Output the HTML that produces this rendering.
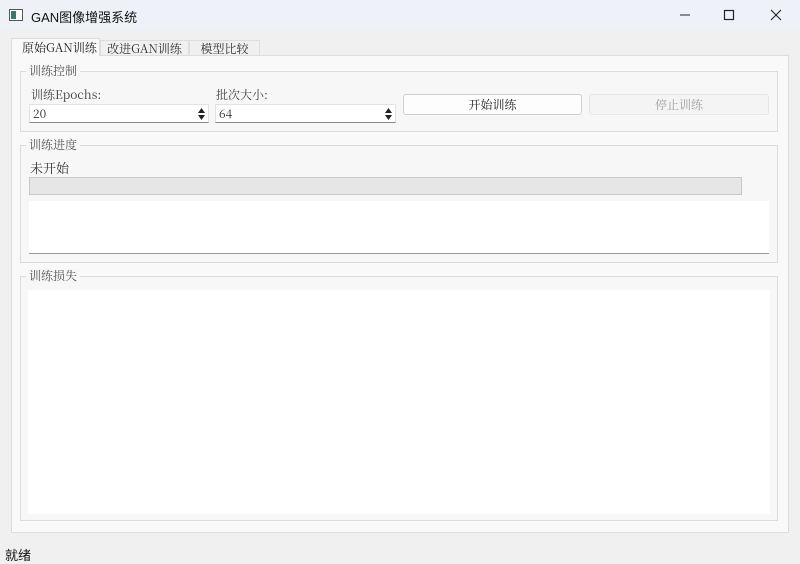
<!DOCTYPE html>
<html><head><meta charset="utf-8"><style>
*{margin:0;padding:0;box-sizing:border-box}
body{width:800px;height:563px;overflow:hidden;background:#f0f0f0;position:relative;font-family:"Noto Serif CJK SC","Liberation Serif",serif;font-size:12px;color:#333}
.a{position:absolute}
.sans{font-family:"Liberation Sans","Noto Sans CJK SC",sans-serif}
.grp{position:absolute;border:1px solid #dcdcdc;background:#f7f7f7}
.gt{position:absolute;background:#f7f7f7;padding:0 3px;color:#555;font-size:12px;line-height:14px}
.spin{position:absolute;background:#fff;border:1px solid #e2e2e2;border-bottom:1px solid #888;height:19px;line-height:17px;padding-left:3px}
.arr{position:absolute;right:2px;top:2px;width:9px;height:14px}
</style></head><body>
<div class="a" style="left:0;top:0;width:800px;height:30px;background:#eef2f8"></div>
<svg class="a" style="left:9px;top:9px" width="14" height="12"><rect x="0.5" y="0.5" width="13" height="11" fill="#fff" stroke="#555"/><rect x="2" y="2" width="5" height="8" fill="#3a7a6a"/></svg>
<div class="a sans" style="left:31px;top:7px;font-size:13px;color:#111">GAN图像增强系统</div>
<svg class="a" style="left:677px;top:8px" width="110" height="14"><line x1="3" y1="7" x2="13" y2="7" stroke="#222"/><rect x="47.5" y="2.5" width="9" height="9" fill="none" stroke="#222" stroke-width="1.2"/><path d="M94 2L104 12M104 2L94 12" stroke="#222" stroke-width="1.1"/></svg>
<div class="a" style="left:11px;top:38px;width:89px;height:18px;background:#f9f9f9;border:1px solid #ddd;border-bottom:none;z-index:2;line-height:17px;padding-left:10px;color:#222">原始GAN训练</div>
<div class="a" style="left:100px;top:40px;width:89px;height:16px;background:#f0f0f0;border:1px solid #ddd;line-height:15px;text-align:center">改进GAN训练</div>
<div class="a" style="left:189px;top:40px;width:71px;height:16px;background:#f0f0f0;border:1px solid #ddd;line-height:15px;text-align:center">模型比较</div>
<div class="a" style="left:11px;top:55px;width:778px;height:478px;background:#f9f9f9;border:1px solid #ddd"></div>
<div class="grp" style="left:20px;top:71px;width:758px;height:61px"></div>
<div class="gt" style="left:26px;top:64px">训练控制</div>
<div class="a" style="left:31px;top:86px;color:#444">训练Epochs:</div>
<div class="spin" style="left:29px;top:104px;width:180px">20<svg class="arr" viewBox="0 0 9 14"><path d="M1 6L4.5 1L8 6Z M1 8L4.5 13L8 8Z" fill="#222"/></svg></div>
<div class="a" style="left:216px;top:86px;color:#444">批次大小:</div>
<div class="spin" style="left:215px;top:104px;width:181px">64<svg class="arr" viewBox="0 0 9 14"><path d="M1 6L4.5 1L8 6Z M1 8L4.5 13L8 8Z" fill="#222"/></svg></div>
<div class="a" style="left:403px;top:94px;width:179px;height:21px;background:#fdfdfd;border:1px solid #d0d0d0;border-radius:3px;text-align:center;line-height:19px;color:#222">开始训练</div>
<div class="a" style="left:589px;top:94px;width:180px;height:21px;background:#f4f4f4;border:1px solid #e6e6e6;border-radius:3px;text-align:center;line-height:19px;color:#a0a0a0">停止训练</div>
<div class="grp" style="left:20px;top:145px;width:758px;height:118px"></div>
<div class="gt" style="left:26px;top:138px">训练进度</div>
<div class="a" style="left:30px;top:158px;font-size:13px;color:#333">未开始</div>
<div class="a" style="left:29px;top:177px;width:713px;height:18px;background:#e6e6e6;border:1px solid #c8c8c8"></div>
<div class="a" style="left:29px;top:201px;width:740px;height:53px;background:#fff;border-bottom:1px solid #999"></div>
<div class="grp" style="left:20px;top:276px;width:758px;height:245px"></div>
<div class="gt" style="left:26px;top:269px">训练损失</div>
<div class="a" style="left:28px;top:290px;width:742px;height:224px;background:#fff"></div>
<div class="a sans" style="left:5px;top:545px;font-size:13px;color:#111">就绪</div>
</body></html>
